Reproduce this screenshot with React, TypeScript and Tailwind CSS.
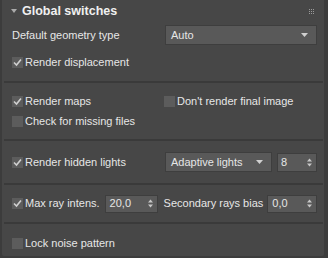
import React from "react";

const font = { fontFamily: '"Liberation Sans", Arial, sans-serif' };

function Check({ on }: { on?: boolean }) {
  return (
    <div className="w-[11px] h-[11px] bg-[#5c5c5c] flex items-center justify-center shrink-0">
      {on && (
        <svg width="9" height="9" viewBox="0 0 9 9">
          <path d="M1 4.5 L3.5 7 L8 1.5" stroke="#cfcfcf" strokeWidth="1.6" fill="none" />
        </svg>
      )}
    </div>
  );
}

function CheckRow({ on, label }: { on?: boolean; label: string }) {
  return (
    <div className="flex items-center gap-[2px]">
      <Check on={on} />
      <span>{label}</span>
    </div>
  );
}

function Arrow() {
  return (
    <svg width="7" height="5" viewBox="0 0 7 5">
      <path d="M0 0 H7 L3.5 4 Z" fill="#d0d0d0" />
    </svg>
  );
}

function Spin() {
  return (
    <svg width="5" height="9" viewBox="0 0 5 9">
      <path d="M0 3.5 L2.5 0.5 L5 3.5 Z" fill="#c8c8c8" />
      <path d="M0 5.5 L2.5 8.5 L5 5.5 Z" fill="#c8c8c8" />
    </svg>
  );
}

function Sep() {
  return <div className="h-[2px] bg-[#3a3a3a] ml-[2px] mr-[1px]" />;
}

export default function App() {
  return (
    <div className="w-[328px] h-[258px] bg-[#3c3c3c] text-[#e6e6e6] text-[11px] leading-none" style={font}>
      <div className="ml-[2px] w-[322px] h-[256px] bg-[#474747] rounded-b-[2px] flex flex-col">
        <div className="h-[22px] flex items-center pl-[9px] pr-[10px]">
          <svg width="6" height="5" viewBox="0 0 6 5" className="mr-[5px]">
            <path d="M0 0 H6 L3 4 Z" fill="#aaaaaa" />
          </svg>
          <span className="font-bold text-[12.5px] text-[#f0f0f0]">Global switches</span>
          <div className="ml-auto grid grid-cols-3 gap-[1px]">
            {Array.from({ length: 9 }).map((_, i) => (
              <div key={i} className="w-[1px] h-[1px] bg-[#9a9a9a]" />
            ))}
          </div>
        </div>
        <div className="h-[59px] flex flex-col pl-[10px] pr-[7px] pt-[3px]">
          <div className="flex items-center h-[20px]">
            <span className="w-[153px] pt-[1px]">Default geometry type</span>
            <div className="flex-1 h-[20px] bg-[#595959] border border-[#3e3e3e] flex items-center pl-[5px] pr-[8px]">
              <span className="pt-[1px]">Auto</span>
              <div className="ml-auto"><Arrow /></div>
            </div>
          </div>
          <div className="mt-[12px]">
            <CheckRow on label="Render displacement" />
          </div>
        </div>
        <Sep />
        <div className="h-[56px] flex flex-col justify-center gap-[9px] pl-[10px] pr-[7px]">
          <div className="flex items-center">
            <div className="w-[152px]"><CheckRow on label="Render maps" /></div>
            <CheckRow label="Don't render final image" />
          </div>
          <CheckRow label="Check for missing files" />
        </div>
        <Sep />
        <div className="h-[42px] flex items-center pl-[10px] pr-[7px]">
          <div className="w-[153px]"><CheckRow on label="Render hidden lights" /></div>
          <div className="w-[107px] h-[20px] bg-[#595959] border border-[#3e3e3e] flex items-center pl-[5px] pr-[8px]">
            <span>Adaptive lights</span>
            <div className="ml-auto"><Arrow /></div>
          </div>
          <div className="ml-[5px] flex-1 h-[19px] bg-[#595959] border border-[#3e3e3e] flex items-center pl-[3px] pr-[4px]">
            <span>8</span>
            <div className="ml-auto"><Spin /></div>
          </div>
        </div>
        <Sep />
        <div className="h-[37px] flex items-center pl-[10px] pr-[7px]">
          <CheckRow on label="Max ray intens." />
          <div className="ml-[5px] w-[53px] h-[18px] bg-[#595959] border border-[#3e3e3e] flex items-center pl-[4px] pr-[4px]">
            <span>20,0</span>
            <div className="ml-auto"><Spin /></div>
          </div>
          <span className="ml-[6px]">Secondary rays bias</span>
          <div className="ml-[4px] flex-1 h-[18px] bg-[#595959] border border-[#3e3e3e] flex items-center pl-[4px] pr-[4px]">
            <span>0,0</span>
            <div className="ml-auto"><Spin /></div>
          </div>
        </div>
        <Sep />
        <div className="flex-1 flex items-center pl-[10px] pt-[6px]">
          <CheckRow label="Lock noise pattern" />
        </div>
      </div>
    </div>
  );
}
